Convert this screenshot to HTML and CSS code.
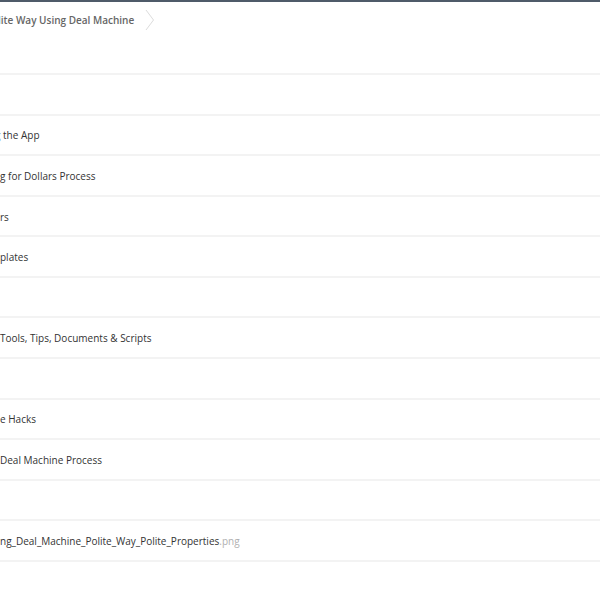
FILE: index.html
```html
<!DOCTYPE html>
<html>
<head>
<meta charset="utf-8">
<link rel="stylesheet" href="styles.css">
</head>
<body>
<div class="page">
  <nav class="crumbs">
    <span class="crumb"><span class="cut-l">l</span>ite Way Using Deal Machine</span>
    <svg class="chev" width="10" height="22" viewBox="0 0 10 22"><path d="M1 1 L8.5 11 L1 21" fill="none" stroke="#dcdcdc" stroke-width="1"/></svg>
  </nav>
  <div class="spacer"></div>
  <ul class="list">
    <li class="row"></li>
    <li class="row"><span class="name"><span class="cut-g">g</span> the App</span></li>
    <li class="row"><span class="name">g for Dollars Process</span></li>
    <li class="row"><span class="name">rs</span></li>
    <li class="row"><span class="name">plates</span></li>
    <li class="row"></li>
    <li class="row"><span class="name">Tools, Tips, Documents &amp; Scripts</span></li>
    <li class="row"></li>
    <li class="row"><span class="name">e Hacks</span></li>
    <li class="row"><span class="name">Deal Machine Process</span></li>
    <li class="row"></li>
    <li class="row"><span class="name">ng_Deal_Machine_Polite_Way_Polite_Properties<span class="ext">.png</span></span></li>
  </ul>
</div>
</body>
</html>
```

FILE: styles.css
```css
html, body {
  margin: 0;
  padding: 0;
  background: #fff;
}
body {
  font-family: "Open Sans", "Noto Sans", sans-serif;
  color: #333;
}
.page {
  border-top: 2px solid #4f5b69;
  overflow: hidden;
}
.crumbs {
  display: flex;
  align-items: center;
  height: 35px;
  gap: 11px;
}
.crumb {
  font-size: 10px;
  font-weight: 600;
  color: #666;
  white-space: nowrap;
}
.cut-l {
  display: inline-block;
  margin-left: -2px;
}
.cut-g {
  display: inline-block;
  margin-left: -5px;
}
.chev {
  display: block;
}
.spacer {
  height: 36px;
  border-bottom: 2px solid #f3f3f3;
}
.list {
  list-style: none;
  margin: 0;
  padding: 0;
}
.row {
  box-sizing: border-box;
  height: 40.58px;
  border-bottom: 2px solid #f3f3f3;
  display: flex;
  align-items: center;
  padding-top: 1px;
}
.name {
  font-size: 10px;
  color: #333;
  white-space: nowrap;
}
.ext {
  color: #b0b0b0;
}
```
